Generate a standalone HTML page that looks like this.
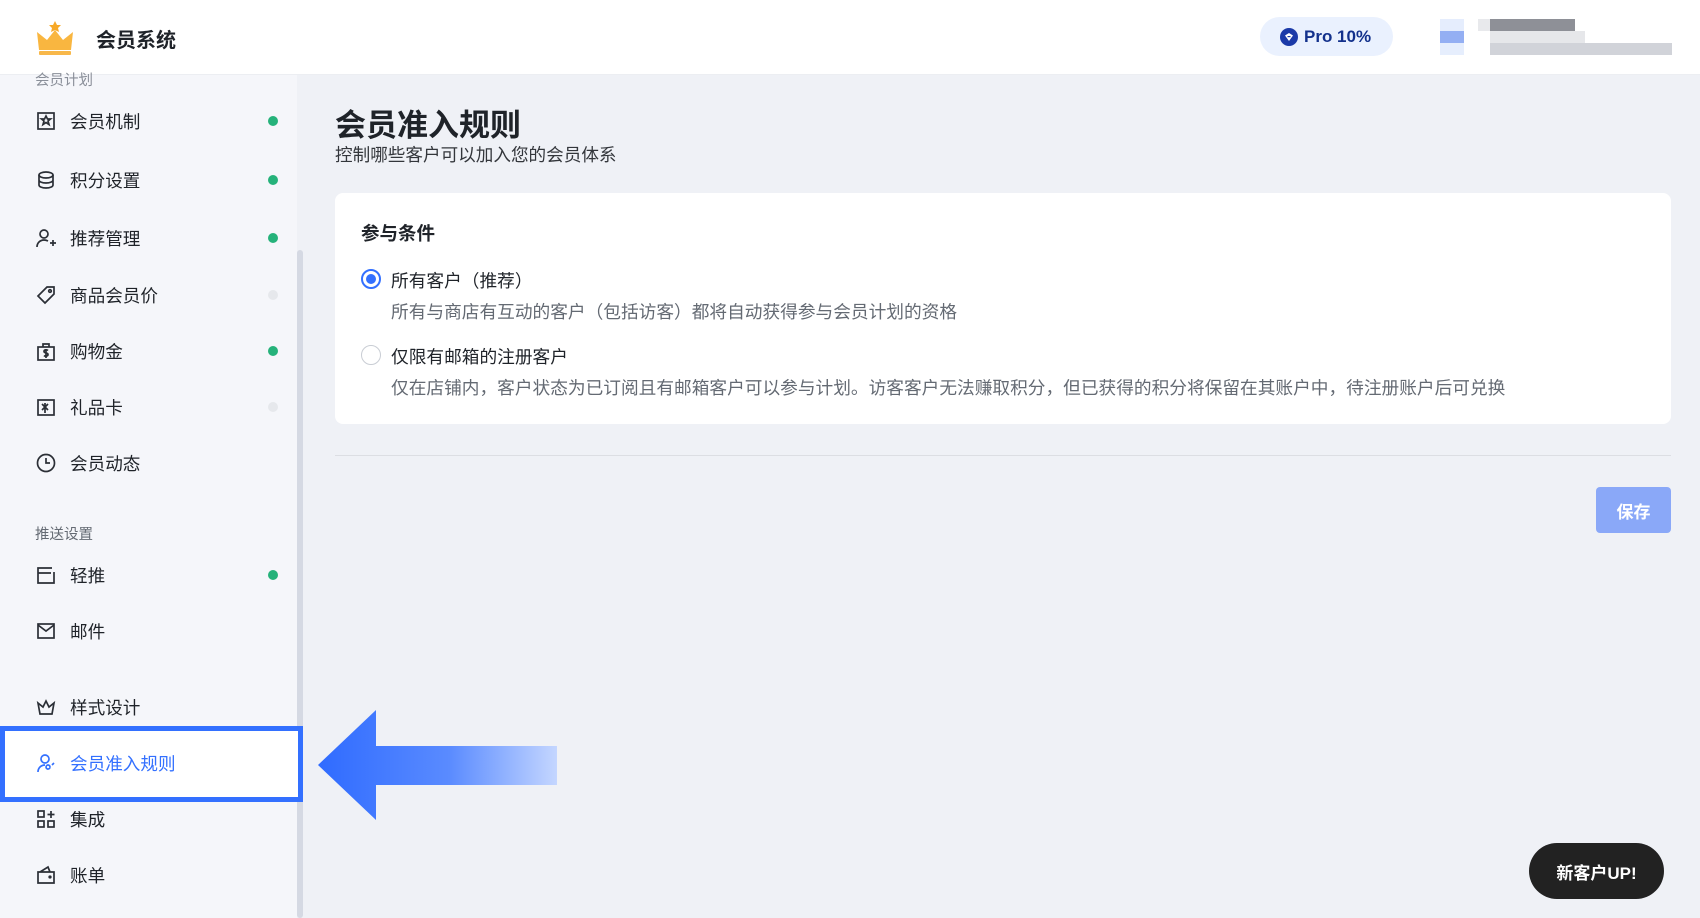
<!DOCTYPE html>
<html><head><meta charset="utf-8"><style>
*{margin:0;padding:0;box-sizing:border-box}
body{width:1700px;height:918px;overflow:hidden;background:#eff1f6;font-family:"Liberation Sans","Noto Sans CJK SC",sans-serif;color:#1f2329;position:relative}
.hdr{position:absolute;left:0;top:0;width:1700px;height:75px;background:#fff;border-bottom:1px solid #eceef2}
.side{position:absolute;left:0;top:75px;width:297px;height:843px;background:#f5f6fa}
.sb{position:absolute;left:297px;top:250px;width:6px;height:668px;background:#d5d9e3;border-radius:3px}
.it{position:absolute;left:36px;font-size:17.6px;display:flex;align-items:center;height:30px;color:#1f2329}
.it svg{width:20px;height:20px;margin-right:14px;fill:none;stroke:#2b2f36;stroke-width:1.7}
.dot{position:absolute;left:268px;width:10px;height:10px;border-radius:5px;background:#25b27a}
.dot.g{background:#e6e8ec}
.lbl{position:absolute;left:35px;font-size:14.5px;color:#646a73}
.main-t{position:absolute;left:335px;top:100px;font-size:31px;font-weight:bold}
.sub{position:absolute;left:335px;top:142px;font-size:17.6px;color:#33363b}
.card{position:absolute;left:335px;top:193px;width:1336px;height:231px;background:#fff;border-radius:8px}
.radio{position:absolute;width:20px;height:20px;border-radius:50%;border:1.5px solid #c9cdd4;background:#fff}
.radio.on{border:2px solid #3370ff}
.radio.on::after{content:"";position:absolute;left:3px;top:3px;width:10px;height:10px;border-radius:50%;background:#3370ff}
.t17{font-size:17.7px}
</style></head><body>
<div class="hdr">
  <svg style="position:absolute;left:36px;top:20px" width="38" height="36" viewBox="0 0 38 36">
    <polygon points="19,1 21,5 25,5 22,8 23,12 19,10 15,12 16,8 13,5 17,5" fill="#f7a928"/>
    <polygon points="1,12 11,20 19,10 27,20 37,12 35,30 3,30" fill="#f9b640"/>
    <rect x="3" y="31" width="32" height="4" rx="1" fill="#f8b84a"/>
  </svg>
  <div style="position:absolute;left:96px;top:24px;font-size:20px;font-weight:bold">会员系统</div>
  <div style="position:absolute;left:1260px;top:17px;width:133px;height:39px;border-radius:20px;background:#eaf1fe;display:flex;align-items:center;padding-left:20px;font-size:17px;font-weight:bold;color:#13318c">
    <svg width="18" height="18" viewBox="0 0 18 18" style="margin-right:6px"><circle cx="9" cy="9" r="9" fill="#1b3aa8"/><path d="M5 7.5 L9 5 L13 7.5 L9 13 Z" fill="#fff"/><rect x="7.5" y="8" width="3" height="1.2" fill="#1b3aa8"/></svg>Pro 10%
  </div>
  <div style="position:absolute;left:1440px;top:19px;width:24px;height:12px;background:#e5edfd"></div>
  <div style="position:absolute;left:1440px;top:31px;width:24px;height:12px;background:#94aff3"></div>
  <div style="position:absolute;left:1440px;top:43px;width:24px;height:12px;background:#e6eefd"></div>
  <div style="position:absolute;left:1478px;top:19px;width:12px;height:12px;background:#e8e9ec"></div>
  <div style="position:absolute;left:1490px;top:19px;width:85px;height:12px;background:#8e9097"></div>
  <div style="position:absolute;left:1490px;top:31px;width:95px;height:12px;background:#e6e7ea"></div>
  <div style="position:absolute;left:1490px;top:43px;width:182px;height:12px;background:#d1d3d9"></div>
</div>
<div class="side">
  <div class="lbl" style="top:-6px;color:#8a8f99">会员计划</div>
</div>
<div class="sb"></div>
<div class="it" style="top:106px"><svg viewBox="0 0 20 20"><rect x="2" y="2" width="16" height="16"/><path d="M10 5l1.5 3h3l-2.5 2 1 3.5-3-2-3 2 1-3.5-2.5-2h3z"/></svg>会员机制</div><div class="dot" style="top:116px"></div>
<div class="it" style="top:165px"><svg viewBox="0 0 20 20"><ellipse cx="10" cy="5" rx="7" ry="3"/><path d="M3 5v10c0 1.7 3 3 7 3s7-1.3 7-3V5M3 10c0 1.7 3 3 7 3s7-1.3 7-3"/></svg>积分设置</div><div class="dot" style="top:175px"></div>
<div class="it" style="top:223px"><svg viewBox="0 0 20 20"><circle cx="8" cy="6" r="4"/><path d="M1 19c0-4 3-7 7-7 2 0 3 .5 4 1M14 15h6M17 12v6"/></svg>推荐管理</div><div class="dot" style="top:233px"></div>
<div class="it" style="top:280px"><svg viewBox="0 0 20 20"><path d="M2 11L11 2h7v7l-9 9z"/><circle cx="14" cy="6" r="1.3"/></svg>商品会员价</div><div class="dot g" style="top:290px"></div>
<div class="it" style="top:336px"><svg viewBox="0 0 20 20"><rect x="2" y="6" width="16" height="13"/><path d="M7 6V3h6v3M12 9.5c-1-1-4-1-4 1s4 1 4 3-3 2-4 1M10 8v9"/></svg>购物金</div><div class="dot" style="top:346px"></div>
<div class="it" style="top:392px"><svg viewBox="0 0 20 20"><rect x="2" y="3" width="16" height="15"/><path d="M6 7l6 6M12 7l-6 6M9 6v10"/></svg>礼品卡</div><div class="dot g" style="top:402px"></div>
<div class="it" style="top:448px"><svg viewBox="0 0 20 20"><circle cx="10" cy="10" r="8.5"/><path d="M10 5v5h4"/></svg>会员动态</div>
<div class="lbl" style="top:523px">推送设置</div>
<div class="it" style="top:560px"><svg viewBox="0 0 20 20"><path d="M16 3H2v15h16V7M2 8h13"/></svg>轻推</div><div class="dot" style="top:570px"></div>
<div class="it" style="top:616px"><svg viewBox="0 0 20 20"><rect x="2" y="3" width="16" height="14"/><path d="M2 4l8 6 8-6"/></svg>邮件</div>
<div class="it" style="top:692px"><svg viewBox="0 0 20 20"><path d="M2 6l5 4 3-6 3 6 5-4-2 11H4z"/></svg>样式设计</div>
<div style="position:absolute;left:0;top:726px;width:303px;height:76px;border:5px solid #3370ff;background:#fff"></div>
<div class="it" style="top:748px;color:#3370ff"><svg viewBox="0 0 20 20" style="stroke:#3370ff"><circle cx="9" cy="6" r="4"/><path d="M2 19c0-4 3-7 7-7M14 14a2 2 0 1 0 0 .1M16 12l2-2"/></svg>会员准入规则</div>
<div class="it" style="top:804px"><svg viewBox="0 0 20 20"><rect x="2" y="2" width="6" height="6"/><rect x="2" y="12" width="6" height="6"/><rect x="12" y="12" width="6" height="6"/><path d="M15 2v7M11.5 5.5h7"/></svg>集成</div>
<div class="it" style="top:860px"><svg viewBox="0 0 20 20"><path d="M2 7h16v11H2zM4 7l8-5 2 5"/><circle cx="14" cy="12" r=".8"/></svg>账单</div>
<svg style="position:absolute;left:318px;top:708px" width="240" height="115" viewBox="0 0 240 115">
  <defs><linearGradient id="g" x1="0" x2="1"><stop offset="0" stop-color="#2f6bff"/><stop offset="0.55" stop-color="#5a8bff"/><stop offset="1" stop-color="#c4d6ff"/></linearGradient></defs>
  <polygon points="0,57 58,2 58,38 239,38 239,77 58,77 58,112" fill="url(#g)"/>
</svg>
<div class="main-t">会员准入规则</div>
<div class="sub">控制哪些客户可以加入您的会员体系</div>
<div class="card">
  <div style="position:absolute;left:26px;top:27px;font-size:18.5px;font-weight:bold">参与条件</div>
  <div class="radio on" style="left:26px;top:76px"></div>
  <div class="t17" style="position:absolute;left:56px;top:74px">所有客户（推荐）</div>
  <div class="t17" style="position:absolute;left:56px;top:105px;color:#646a73">所有与商店有互动的客户（包括访客）都将自动获得参与会员计划的资格</div>
  <div class="radio" style="left:26px;top:152px"></div>
  <div class="t17" style="position:absolute;left:56px;top:150px">仅限有邮箱的注册客户</div>
  <div class="t17" style="position:absolute;left:56px;top:181px;color:#646a73">仅在店铺内，客户状态为已订阅且有邮箱客户可以参与计划。访客客户无法赚取积分，但已获得的积分将保留在其账户中，待注册账户后可兑换</div>
</div>
<div style="position:absolute;left:335px;top:455px;width:1336px;height:1px;background:#dcdee3"></div>
<div style="position:absolute;left:1596px;top:487px;width:75px;height:46px;border-radius:4px;background:#8aa8f8;color:#fff;font-size:17px;font-weight:bold;display:flex;align-items:center;justify-content:center">保存</div>
<div style="position:absolute;left:1529px;top:843px;width:135px;height:56px;border-radius:28px;background:#222;color:#fff;font-size:17px;font-weight:bold;display:flex;align-items:center;justify-content:center">新客户UP!</div>
</body></html>
